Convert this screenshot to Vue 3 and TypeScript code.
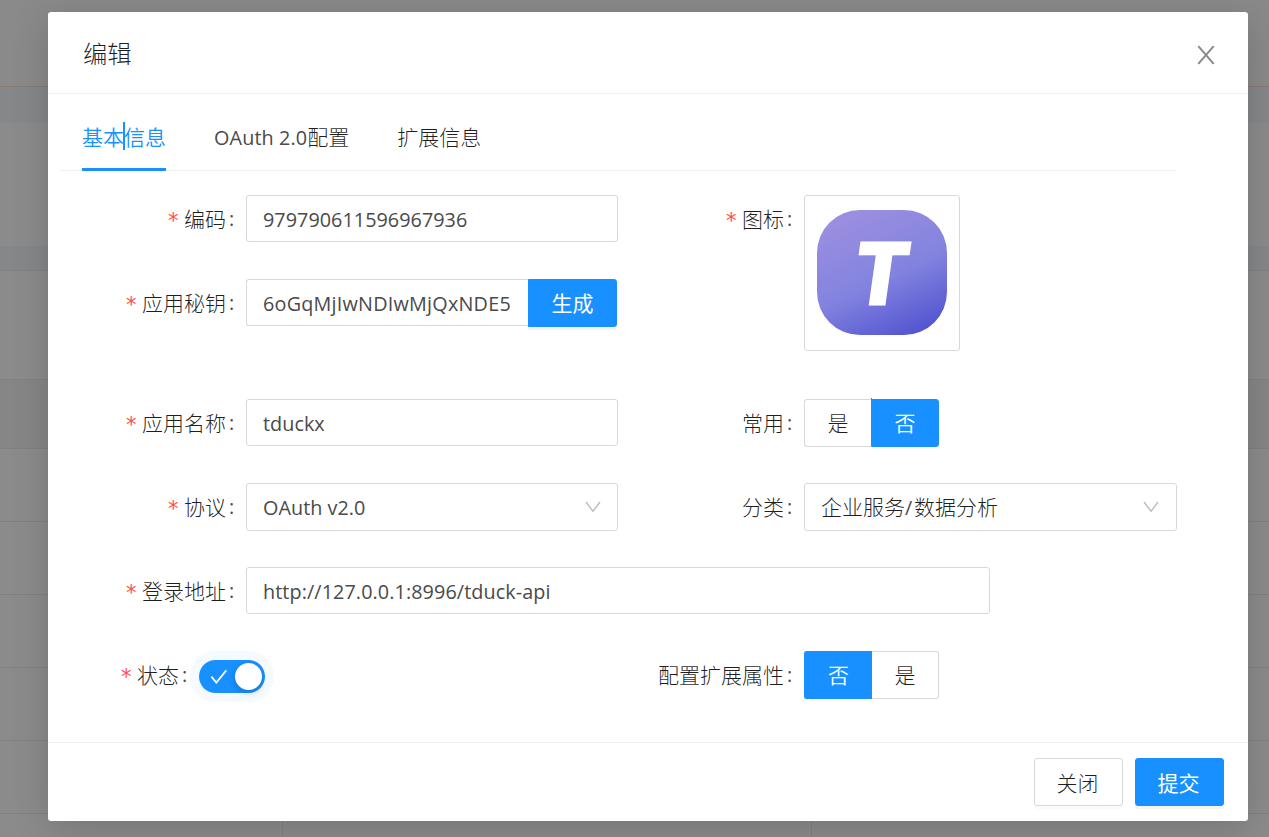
<script setup lang="ts">
import { ref } from 'vue'

interface BackRow { height: number; kind: string }

const backRows: BackRow[] = [
  { height: 87, kind: 'top' },
  { height: 36, kind: 'blue' },
  { height: 123, kind: 'plain' },
  { height: 25, kind: 'blue lined' },
  { height: 109, kind: 'lined' },
  { height: 69, kind: 'lined shade' },
  { height: 73, kind: 'lined' },
  { height: 73, kind: 'lined' },
  { height: 73, kind: 'lined' },
  { height: 73, kind: 'lined' },
  { height: 73, kind: 'lined' },
]

const code = ref('979790611596967936')
const secret = ref('6oGqMjIwNDIwMjQxNDE5')
const appName = ref('tduckx')
const loginUrl = ref('http://127.0.0.1:8996/tduck-api')
</script>

<template>
  <div class="screen">
    <div class="backdrop">
      <div v-for="(row, i) in backRows" :key="i" class="brow" :class="row.kind" :style="{ height: row.height + 'px' }"></div>
      <div class="cells"><i class="c1"></i><i class="c2"></i><i class="c3"></i></div>
    </div>

    <section class="modal">
      <header class="head">
        <span class="title">编辑</span>
        <svg class="close" width="18" height="20" viewBox="0 0 18 20"><path d="M1.3 1.2 16.7 18.8M16.7 1.2 1.3 18.8" fill="none" stroke="#8a8a8a" stroke-width="2" /></svg>
      </header>

      <div class="body">
        <nav class="tabs">
          <div class="tab active">基本信息<i class="caret"></i></div>
          <div class="tab"><span class="lat tab-lat">OAuth 2.0</span>配置</div>
          <div class="tab">扩展信息</div>
        </nav>

        <div class="form">
          <label class="label r1 left"><b>*</b>编码<i>:</i></label>
          <div class="field r1 left"><div class="input lat">{{ code }}</div></div>

          <label class="label r1 right"><b>*</b>图标<i>:</i></label>
          <div class="field r1 right tall">
            <div class="upload"><div class="logo"><span>T</span></div></div>
          </div>

          <label class="label r2 left"><b>*</b>应用秘钥<i>:</i></label>
          <div class="field r2 left">
            <div class="input lat joined">{{ secret }}</div>
            <button class="btn primary gen">生成</button>
          </div>

          <label class="label r3 left"><b>*</b>应用名称<i>:</i></label>
          <div class="field r3 left"><div class="input lat">{{ appName }}</div></div>
          <label class="label r3 right">常用<i>:</i></label>
          <div class="field r3 right">
            <div class="radio first">是</div><div class="radio last on mark">否</div>
          </div>

          <label class="label r4 left"><b>*</b>协议<i>:</i></label>
          <div class="field r4 left">
            <div class="input select"><span class="lat">OAuth v2.0</span>
              <svg width="16" height="12" viewBox="0 0 16 12"><path d="M1 1 8 10.3 15 1" fill="none" stroke="#bfbfbf" stroke-width="1.5" /></svg>
            </div>
          </div>
          <label class="label r4 right">分类<i>:</i></label>
          <div class="field r4 right">
            <div class="input select category"><span>企业服务<span class="lat slash">/</span>数据分析</span>
              <svg width="16" height="12" viewBox="0 0 16 12"><path d="M1 1 8 10.3 15 1" fill="none" stroke="#bfbfbf" stroke-width="1.5" /></svg>
            </div>
          </div>

          <label class="label r5 left"><b>*</b>登录地址<i>:</i></label>
          <div class="field r5 wide-field"><div class="input lat url">{{ loginUrl }}</div></div>

          <div class="status">
            <label class="label short"><b>*</b>状态<i>:</i></label>
            <div class="switch">
              <svg width="18" height="16" viewBox="0 0 18 16"><path d="M1.4 7.6 6.3 13.6 16.3 1.4" fill="none" stroke="#fff" stroke-width="1.7" /></svg>
              <span class="knob"></span>
            </div>
          </div>
          <label class="label r6 right">配置扩展属性<i>:</i></label>
          <div class="field r6 right">
            <div class="radio first on lead">否</div><div class="radio last">是</div>
          </div>
        </div>
      </div>

      <footer class="foot">
        <button class="btn">关闭</button>
        <button class="btn primary">提交</button>
      </footer>
    </section>
  </div>
</template>

<style>
body { margin: 0; overflow: hidden; }
</style>

<style scoped>
.screen {
  position: relative;
  box-sizing: border-box;
  width: 1269px;
  height: 837px;
  padding: 12px 0 0 48px;
  overflow: hidden;
  font-family: "Noto Sans CJK SC", sans-serif;
  font-weight: 300;
  font-size: 21px;
  color: rgba(0, 0, 0, 0.88);
}
.screen * { box-sizing: border-box; }
.lat { font-family: "Open Sans", "Noto Sans CJK SC", sans-serif; font-size: 19.8px; font-weight: 400; letter-spacing: 0.04px; color: #4a4a4a; }

.backdrop { position: absolute; inset: 0; background: #8b8b8b; }
.brow { background: #8b8b8b; }
.brow.top { border-bottom: 1px solid #857c76; background: #8a8a8a; }
.brow.blue { background: #858789; }
.brow.shade { background: #868686; }
.brow.lined { border-bottom: 1px solid #818181; }
.cells { display: flex; height: 30px; }
.cells i { height: 30px; border-right: 1px solid #818181; }
.c1 { width: 283px; }
.c2 { width: 529px; }
.cells .c3 { flex: 1; border: 0; }

.modal {
  position: relative;
  display: flex;
  flex-direction: column;
  width: 1200px;
  height: 809px;
  background: #fff;
  border-radius: 3px;
  box-shadow: 0 6px 36px rgba(0, 0, 0, 0.17);
}
.head {
  display: flex;
  justify-content: space-between;
  align-items: center;
  height: 82px;
  padding: 0 33px 0 35px;
  border-bottom: 1px solid #f0f0f0;
}
.title { font-size: 24.3px; line-height: 36px; }
.close { display: block; margin-top: 5px; }

.body { flex: 1; padding: 0 71px 0 12px; }
.tabs { display: flex; gap: 48px; height: 77px; padding-left: 22px; border-bottom: 1px solid #f0f0f0; }
.tab { position: relative; height: 77px; line-height: 84px; white-space: nowrap; }
.tab.active { width: 84px; color: #1890ff; font-weight: 350; border-bottom: 3px solid #1890ff; }
.tab-lat { letter-spacing: 0.12px; }
.caret { position: absolute; left: 41px; top: 28px; width: 2px; height: 28px; background: #1890ff; }

.form {
  display: grid;
  grid-template-columns: 186px 372px 186px 373px;
  grid-template-rows: 84px 120px 84px 84px 84px 84px;
  padding-top: 24px;
}
.r1 { grid-row: 1; }
.r2 { grid-row: 2; }
.r3 { grid-row: 3; }
.r4 { grid-row: 4; }
.r5 { grid-row: 5; }
.r6 { grid-row: 6; }
.tall { grid-row: 1 / 3; }
.label { display: flex; justify-content: flex-end; height: 48px; line-height: 46px; white-space: nowrap; }
.label.left { grid-column: 1; }
.label.right { grid-column: 3; }
.label b { width: 11px; margin-right: 5px; color: #ff4d4f; font: 400 21px/53px "DejaVu Sans", sans-serif; }
.label i { width: 5px; margin: 0 12px 0 3px; font: 400 19.8px/47px "Open Sans", sans-serif; color: #4a4a4a; }
.field { display: flex; align-items: flex-start; }
.field.left { grid-column: 2; }
.field.right { grid-column: 4; }
.wide-field { grid-column: 2 / 5; }
.wide-field .input { width: 744px; flex: none; }
.input {
  flex: 1;
  height: 47px;
  padding: 0 16px;
  line-height: 47px;
  border: 1px solid #d9d9d9;
  border-radius: 3px;
  white-space: nowrap;
  overflow: hidden;
}
.joined { border-right: 0; border-radius: 3px 0 0 3px; letter-spacing: 0.22px; }
.url { letter-spacing: 0.09px; }
.select { display: flex; justify-content: space-between; align-items: center; height: 48px; }
.category { padding-right: 17px; }
.slash { letter-spacing: 1.7px; }

.btn {
  width: 89px;
  height: 48px;
  padding: 0 2px 0 0;
  font: inherit;
  line-height: 44px;
  color: rgba(0, 0, 0, 0.88);
  background: #fff;
  border: 1px solid #d9d9d9;
  border-radius: 3px;
  box-shadow: 0 3px 0 rgba(0, 0, 0, 0.02);
}
.btn.primary { color: #fff; font-weight: 400; background: #1890ff; border-color: #1890ff; box-shadow: 0 3px 0 rgba(0, 0, 0, 0.045); }
.btn.gen { margin-right: 1px; padding: 0 0 2px; border-radius: 0 3px 3px 0; }

.upload { display: flex; width: 156px; height: 156px; padding: 14px 12px; border: 1px solid #d9d9d9; border-radius: 3px; }
.logo {
  display: flex;
  justify-content: center;
  width: 130px;
  height: 125px;
  border-radius: 43px;
  background: linear-gradient(155deg, #9c8fe0 8%, #8283df 54%, #5152cf 94%);
}
.logo span {
  margin-right: 1px;
  font: 700 85.5px/122px "Open Sans", sans-serif;
  color: #fff;
  -webkit-text-stroke: 3px #fff;
  paint-order: stroke fill;
  stroke-linejoin: round;
  transform: skewX(-8deg) scaleX(1.04);
}

.radio { position: relative; width: 68px; height: 48px; line-height: 45px; text-align: center; border: 1px solid #d9d9d9; }
.radio.first { width: 67px; border-right: 0; border-radius: 3px 0 0 3px; }
.radio.last { border-radius: 0 3px 3px 0; }
.radio.on { color: #fff; font-weight: 350; background: #1890ff; border-color: #1890ff; }
.radio.first.lead { width: 68px; }
.radio.lead + .radio { width: 67px; border-left: 0; }
.radio.mark::before { content: ""; position: absolute; left: -1px; top: -2px; width: 1px; height: 2px; background: #1890ff; }

.status { grid-row: 6; grid-column: 1 / 3; display: flex; }
.short { width: 139px; }
.switch {
  display: flex;
  align-items: center;
  justify-content: space-between;
  width: 66px;
  height: 33px;
  margin-top: 9px;
  padding: 0 3px 0 11px;
  border-radius: 17px;
  background: #1890ff;
  box-shadow: 0 0 0 9px #f5faff;
}
.knob { width: 27px; height: 27px; border-radius: 50%; background: #fff; box-shadow: 0 3px 6px rgba(0, 35, 11, 0.2); }

.foot {
  display: flex;
  justify-content: flex-end;
  gap: 12px;
  height: 79px;
  padding: 15px 24px 0 0;
  border-top: 1px solid #f0f0f0;
}
</style>
